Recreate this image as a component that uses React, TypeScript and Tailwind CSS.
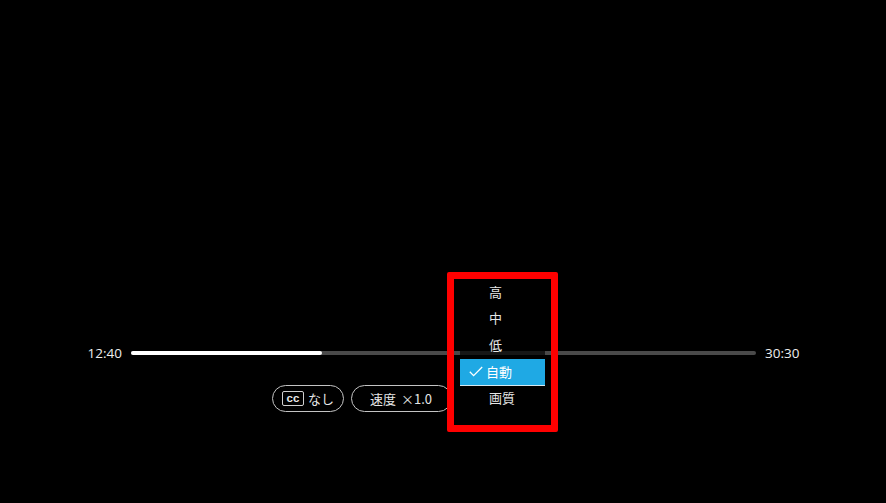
export default function App() {
  const font = { fontFamily: '"Noto Sans CJK JP", "Noto Sans", sans-serif' };
  return (
    <div className="relative h-[503px] w-[886px] overflow-hidden bg-black text-white" style={font}>
      <div className="flex flex-col pt-[343px]">
        <div className="flex h-5 items-center">
          <span className="w-[122px] text-right font-['Open_Sans','Noto_Sans',sans-serif] text-[13.5px] leading-5 text-[#eeeeee]">12:40</span>
          <div className="ml-[9px] h-1 w-[625px] rounded-full bg-[#4a4a4a]">
            <div className="h-1 w-[190.5px] rounded-full bg-white" />
          </div>
          <span className="ml-[9px] font-['Open_Sans','Noto_Sans',sans-serif] text-[13.5px] leading-5 text-[#eeeeee]">30:30</span>
        </div>
        <div className="mt-[22px] flex gap-[7px] pl-[272px]">
          <div className="flex h-[27px] w-[72px] items-center justify-center gap-[4px] rounded-full border border-[#c4c4c4] text-[13px] text-[#e6e6e6]">
            <span className="flex h-[15px] w-[22px] items-center justify-center rounded-[2px] border-[1.5px] border-[#d0d0d0] font-['Liberation_Sans',sans-serif] text-[11.5px] font-bold leading-none">cc</span>
            <span>なし</span>
          </div>
          <div className="flex h-[27px] w-[101px] items-center justify-center gap-[5px] rounded-full border border-[#c4c4c4] pr-[1px] text-[13px] text-[#e6e6e6]">
            <span>速度</span>
            <span>×1.0</span>
          </div>
        </div>
      </div>
      <div className="absolute left-[447px] top-[272px] flex h-[160px] w-[111px] flex-col rounded-[2px] border-[7px] border-[#ff0000] pl-[6px]">
        <div className="flex w-[85px] flex-col bg-black/70 text-[13px] text-[#e6e6e6]">
          <div className="flex h-[26.5px] items-center pb-[2px] pl-[29px]">高</div>
          <div className="flex h-[26.5px] items-center pb-[2px] pl-[29px]">中</div>
          <div className="flex h-[26.5px] items-center pb-[2px] pl-[29px]">低</div>
          <div className="flex h-[27px] items-center gap-[4px] border-b border-[#d5e8f0] bg-[#1fa9e4] pl-[9px] text-white">
            <svg width="14" height="11" viewBox="0 0 14 11" fill="none" stroke="white" strokeWidth="1.3">
              <path d="M0.8 5.8L4.6 9.6L13.2 1" />
            </svg>
            <span className="-ml-[1px]">自動</span>
          </div>
          <div className="flex h-[26.5px] items-center pb-[2px] pl-[29px]">画質</div>
        </div>
      </div>
    </div>
  );
}
